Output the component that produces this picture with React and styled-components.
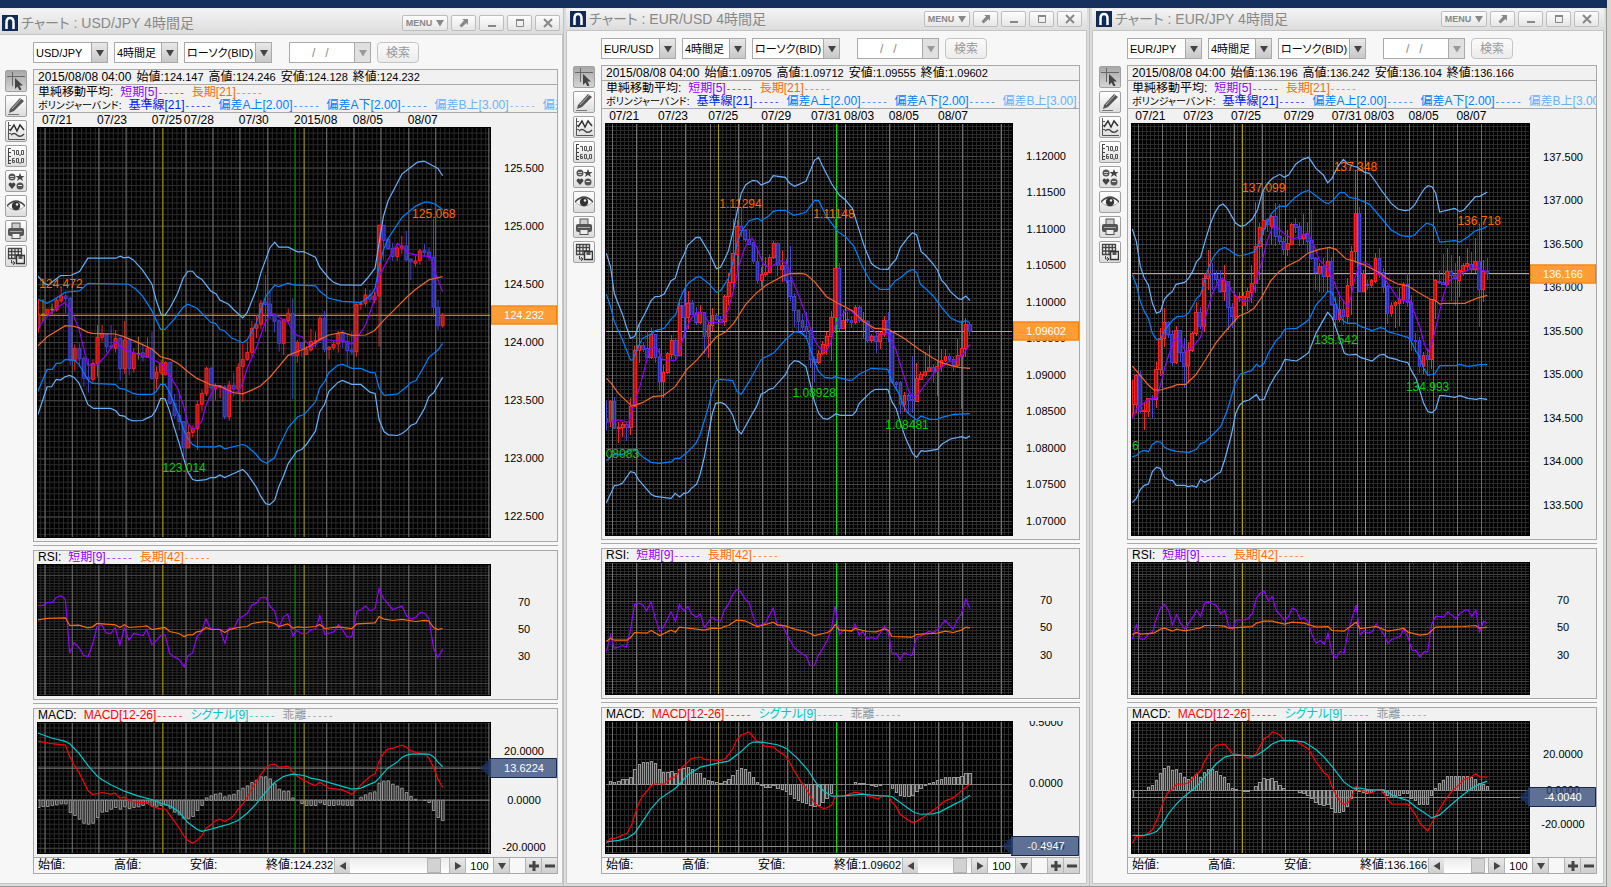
import React, { useState } from 'react';
import styled, { createGlobalStyle } from 'styled-components';

// Chart data. All series of one pane share the units of its box: [x, y, width, height]
// Candles are: colour (r = up, b = down, y = flat), body top, body bottom, wick top, wick bottom
const usdJpy = {
    pair: 'USD/JPY',
    plotHeights: [411, 132, 132],
    prices: ['124.147', '124.246', '124.128', '124.232'],
    dates: [['07/21', 117], ['07/23', 268], ['07/25', 419], ['07/28', 507], ['07/30', 658], ['2015/08', 810], ['08/05', 972], ['08/07', 1123]],
    days: [125, 200, 273, 348, 425, 513, 587, 661, 738, 900, 975, 1049, 1126, 1200, 1346],
    weeks: [449, 838],
    months: [813],
    monthColor: '#009c00',
    first: 107,
    step: 12.494,
    price: {
        box: [103, -398, 1249, 1231],
        major: [-275, 174.2],
        minor: 17.42,
        axis: [['125.500', -275], ['125.000', -101], ['124.500', 72], ['124.000', 246], ['123.500', 420], ['123.000', 594], ['122.500', 766]],
        now: ['124.232', 166],
        marks: [['125.068', 1135, -137, 'high'], ['124.472', 109, 72, 'high'], ['123.014', 448, 624, 'low']],
        lines: [
            ['#0080ff', '105,117 130,130 145,122 168,106 181,97 220,93 243,70 355,73 375,88 393,108 419,152 443,208 455,208 480,178 505,142 518,133 543,145 581,187 594,190 606,208 619,213 640,235 669,248 681,240 706,190 732,110 745,92 757,76 768,80 794,70 808,75 869,78 881,94 906,115 943,124 994,128 1007,118 1025,100 1033,85 1044,20 1056,-30 1069,-64 1107,-127 1145,-161 1169,-173 1181,-173 1200,-166 1219,-150'],
            ['#0080ff', '105,395 131,328 145,328 156,310 168,310 181,298 205,300 218,312 230,335 245,362 256,370 318,373 330,385 345,388 368,400 380,403 419,403 430,395 443,373 455,373 467,395 480,430 493,465 507,510 518,535 531,553 543,560 594,560 606,556 619,566 669,553 681,558 706,583 718,600 735,609 757,592 768,560 781,532 794,502 820,470 838,463 869,425 881,383 894,365 906,338 931,315 945,313 969,325 994,325 1019,337 1033,338 1044,383 1058,406 1094,402 1120,380 1132,367 1145,362 1169,317 1181,292 1206,270 1219,250'],
            ['#66b2ff', '105,48 125,72 135,75 150,62 168,47 197,46 220,35 243,-5 320,-5 332,-11 342,-6 355,-8 368,0 393,30 419,72 432,125 445,165 455,166 470,142 490,100 505,55 518,34 531,34 543,50 556,58 581,93 596,102 606,120 630,133 645,150 669,174 681,158 706,90 720,35 732,0 743,-35 757,-53 768,-38 794,-38 820,-24 836,-25 869,-8 881,22 906,55 920,68 937,75 995,76 1012,55 1033,25 1044,-50 1056,-130 1069,-177 1107,-257 1132,-278 1150,-293 1168,-296 1206,-274 1219,-252'],
            ['#66b2ff', '105,465 131,380 143,380 156,358 168,360 180,350 193,346 205,352 218,368 230,398 243,433 258,445 305,445 320,452 330,466 343,468 355,478 368,482 393,481 406,474 419,468 430,450 443,415 455,416 467,450 480,500 493,545 505,590 518,635 531,658 543,661 568,658 581,652 594,652 606,644 619,652 644,640 669,628 681,640 706,680 718,707 732,730 743,733 757,720 768,680 781,648 794,610 818,573 831,568 844,553 869,513 881,455 894,433 906,394 931,367 943,361 969,373 994,373 1019,396 1033,400 1044,478 1058,515 1070,524 1094,526 1107,520 1120,510 1132,495 1145,490 1169,445 1181,410 1194,398 1219,352'],
            ['#9400ff', '105,203 125,178 140,160 165,138 180,128 193,145 205,172 218,205 243,315 268,315 293,285 318,245 342,268 368,278 393,286 405,290 430,303 450,315 467,345 490,385 507,440 518,490 531,507 543,500 556,485 568,435 581,405 594,382 606,377 631,398 656,395 669,370 681,325 706,265 730,190 745,160 757,163 781,180 794,187 807,215 820,227 832,230 856,262 869,255 881,240 906,240 931,243 943,240 969,253 982,235 1007,195 1031,120 1044,50 1068,0 1095,-50 1107,-38 1132,-18 1156,-13 1185,-10 1194,25 1206,60 1219,95'],
            ['#f06428', '105,258 131,230 181,197 200,198 218,203 243,217 256,220 318,222 342,230 380,247 419,267 443,290 470,298 493,312 518,335 543,355 581,374 606,378 644,398 669,401 694,390 718,377 745,350 768,320 794,286 831,270 856,257 881,238 906,225 943,217 969,226 1007,225 1031,212 1056,182 1081,155 1120,112 1145,88 1181,60 1200,55 1219,50'],
        ],
        candles: 'r164,204,118,218 y163,164,118,183 r148,164,148,168 y148,150,130,163 r121,150,115,155 r108,122,83,130 b108,116,95,160 b115,302,110,315 r265,302,253,332 b265,296,250,320 b295,355,287,380 b352,358,296,398 r310,358,298,368 r232,310,195,350 r220,232,195,245 b222,260,222,277 b258,262,195,268 r235,265,210,278 b235,326,230,362 r240,326,183,342 b240,326,235,345 r280,326,265,338 y280,282,230,298 b278,292,250,305 r265,292,232,290 b265,355,215,358 r337,355,320,388 r310,338,300,345 r307,344,303,346 b307,430,305,435 b430,466,402,475 b466,484,398,510 b484,563,484,590 r517,563,495,565 r505,517,495,532 r433,505,423,570 r400,433,388,455 r325,400,320,408 b325,383,320,420 r377,385,370,420 r377,382,375,415 b380,470,375,478 r375,470,362,482 b375,387,338,410 r322,387,310,400 r298,320,250,425 r277,298,245,302 r205,277,182,290 r193,205,165,235 r130,193,120,208 b128,134,45,215 b132,165,95,177 b165,184,162,217 b182,250,180,275 r178,250,178,285 r160,182,145,188 b160,287,115,417 r247,287,240,308 b247,265,247,292 r268,284,258,284 r244,270,207,275 r242,246,215,262 r175,240,168,242 b175,268,153,277 r262,268,258,298 r253,263,242,270 r220,252,213,278 b220,244,210,264 b244,272,222,318 b270,276,215,285 r133,275,130,290 r131,134,122,150 r105,130,85,140 b106,118,90,128 r108,120,95,130 r-104,108,-104,260 b-104,-58,-104,0 b-62,-34,-62,-30 b-35,-10,-52,3 r-36,-10,-42,3 r-42,-35,-72,-18 b-42,0,-87,5 b-2,5,-5,60 r3,10,-12,20 r-27,2,-33,15 b-28,-22,-47,-12 b-24,-8,-38,3 b-8,142,-123,172 b142,197,120,210 r165,197,160,203',
    },
    rsi: {
        box: [103, 72, 1249, 395],
        major: [187, 81],
        minor: 8.1,
        axis: [['70', 187], ['50', 268], ['30', 348]],
        lines: [
            ['#9400ff', '105,197 119,196 131,187 145,187 156,172 169,167 181,177 193,338 205,308 218,322 231,345 243,350 256,312 268,260 281,254 293,278 306,280 318,263 331,315 343,263 356,300 369,280 395,286 405,268 419,313 430,303 443,286 455,283 468,340 480,350 493,357 508,380 518,347 531,338 543,290 555,275 568,237 581,266 606,267 620,310 631,263 645,264 656,238 681,220 694,195 706,190 718,173 732,172 745,200 757,213 768,263 781,230 793,222 807,288 818,271 831,280 845,280 856,270 870,265 881,226 895,283 920,275 932,253 945,272 956,290 969,290 983,213 995,208 1007,198 1019,212 1033,205 1044,145 1056,175 1068,190 1081,208 1107,198 1120,228 1132,236 1145,232 1157,217 1169,219 1181,235 1194,325 1206,352 1219,327'],
            ['#ff6a00', '105,239 131,235 181,233 193,256 218,255 243,263 256,260 268,250 318,254 331,262 343,254 356,262 393,259 405,257 419,268 455,262 468,274 493,280 508,289 518,284 531,284 543,275 556,272 568,262 581,268 606,268 620,277 631,269 656,262 681,259 694,250 732,244 757,250 768,259 793,251 807,264 820,260 838,262 869,259 881,253 895,265 932,260 969,265 983,251 1033,248 1044,229 1056,236 1081,241 1107,238 1145,244 1169,241 1181,243 1194,262 1206,268 1219,265'],
        ],
    },
    macd: {
        box: [103, 547, 1249, 395],
        major: [637, 144],
        minor: 14.4,
        axis: [['20.0000', 635], ['0.0000', 779], ['-20.0000', 920]],
        cursor: ['13.6224', 685],
        zero: 781,
        bars: [803, 800, 800, 797, 795, 792, 792, 818, 827, 838, 850, 853, 850, 833, 817, 815, 808, 803, 808, 801, 806, 803, 801, 797, 790, 799, 799, 797, 795, 805, 817, 825, 835, 836, 830, 812, 797, 774, 768, 763, 760, 771, 766, 763, 752, 745, 738, 728, 721, 711, 711, 717, 732, 748, 754, 754, 774, 781, 791, 797, 797, 797, 789, 794, 797, 797, 795, 796, 797, 797, 781, 772, 765, 759, 756, 730, 724, 723, 733, 739, 745, 758, 770, 778, 781, 782, 788, 812, 833, 842],
        lines: [
            ['#ff0000', '105,604 143,612 181,616 193,650 205,675 218,697 243,752 256,764 281,758 306,763 318,760 331,775 343,772 356,782 380,788 405,788 419,800 430,803 443,807 457,808 468,825 493,862 507,888 518,902 531,910 543,902 556,888 568,865 581,855 594,843 606,838 620,845 644,828 656,808 669,793 681,772 706,725 718,705 732,685 745,675 757,673 768,683 793,679 807,697 820,710 838,722 856,732 869,737 881,727 906,745 943,750 969,763 982,750 994,735 1019,710 1033,703 1044,665 1056,642 1068,628 1081,626 1107,616 1120,623 1132,633 1145,638 1157,641 1170,642 1181,655 1194,683 1206,718 1219,743'],
            ['#00c8c8', '105,580 143,595 181,605 193,612 218,640 243,677 268,708 281,719 306,735 343,754 380,768 419,779 443,790 468,798 493,815 518,848 543,868 556,874 581,868 606,860 631,853 656,842 681,820 706,792 732,757 757,727 781,710 806,703 838,707 856,715 881,720 919,732 969,748 994,745 1019,733 1033,727 1044,715 1068,685 1094,667 1107,653 1120,646 1132,643 1181,643 1194,651 1206,667 1219,681'],
        ],
    },
};

const eurUsd = {
    pair: 'EUR/USD',
    plotHeights: [413, 133, 133],
    prices: ['1.09705', '1.09712', '1.09555', '1.09602'],
    dates: [['07/21', 143], ['07/23', 285], ['07/25', 431], ['07/29', 585], ['07/31', 730], ['08/03', 826], ['08/05', 956], ['08/07', 1099]],
    days: [152, 222, 294, 364, 437, 518, 590, 662, 733, 887, 959, 1030, 1101, 1171, 1284],
    weeks: [460, 829],
    months: [805],
    monthColor: '#00dc00',
    first: 135,
    step: 11.876,
    price: {
        box: [131, -411, 1186, 1239],
        major: [-312, 109.6],
        minor: 10.96,
        axis: [['1.12000', -313], ['1.11500', -204], ['1.11000', -94], ['1.10500', 14], ['1.10000', 125], ['1.09500', 235], ['1.09000', 344], ['1.08500', 452], ['1.08000', 563], ['1.07500', 671], ['1.07000', 782]],
        now: ['1.09602', 214],
        marks: [['1.11294', 463, -169, 'high'], ['1.11148', 736, -138, 'high'], ['08083', 133, 581, 'low'], ['1.08928', 676, 399, 'low'], ['1.08481', 946, 494, 'low']],
        lines: [
            ['#0080ff', '135,103 147,140 158,185 182,240 205,300 212,300 225,265 240,235 265,222 277,212 303,205 325,175 337,163 348,120 360,90 375,68 395,53 407,50 432,70 455,97 467,92 490,55 502,10 515,-50 527,-85 550,-118 575,-125 585,-118 608,-133 620,-146 633,-149 655,-149 680,-134 715,-143 727,-160 740,-179 752,-178 775,-130 808,-85 830,-70 855,-40 875,10 890,40 905,68 930,88 955,88 975,62 990,53 1012,34 1025,28 1037,38 1048,73 1060,83 1085,108 1110,143 1135,173 1158,185 1168,187 1180,182 1192,188'],
            ['#0080ff', '135,602 158,582 182,583 205,570 217,568 240,590 265,607 290,610 325,605 335,595 348,595 372,575 395,550 407,525 432,440 445,385 455,362 467,358 502,362 515,395 527,403 550,365 585,298 620,280 655,240 682,215 700,218 715,230 727,265 740,305 752,335 770,352 790,355 800,350 840,361 850,360 870,343 905,325 953,328 965,365 985,400 1000,440 1012,460 1037,480 1050,468 1075,478 1097,478 1110,472 1145,463 1192,461'],
            ['#66b2ff', '135,-20 147,20 158,100 170,133 182,163 193,200 205,235 217,230 229,195 245,165 265,122 277,110 290,109 303,102 323,62 335,55 348,10 360,-15 372,-45 395,-67 407,-68 432,-25 455,26 467,22 480,-5 490,-28 502,-80 515,-145 527,-200 540,-226 560,-239 573,-237 585,-225 608,-235 620,-253 655,-248 668,-230 682,-221 715,-236 740,-299 752,-308 762,-285 790,-228 812,-195 830,-180 850,-155 862,-115 885,-40 905,10 917,20 930,27 953,28 965,12 977,-2 990,-38 1012,-68 1025,-82 1037,-75 1050,-25 1062,-15 1085,12 1097,30 1110,62 1120,72 1135,95 1158,116 1168,118 1180,108 1192,122'],
            ['#66b2ff', '135,728 158,677 170,675 182,669 205,635 217,638 229,660 265,703 277,709 323,715 335,700 348,711 360,700 372,698 382,685 397,673 407,645 420,590 432,520 443,460 453,430 467,427 480,433 490,445 502,465 515,508 527,522 560,460 573,437 585,402 597,397 608,388 620,385 655,345 668,315 682,302 695,305 715,320 727,370 740,425 752,460 765,475 778,478 790,470 802,461 815,466 850,466 860,455 870,430 905,395 917,388 953,388 965,425 977,445 990,490 1005,535 1025,580 1037,592 1050,572 1062,574 1097,568 1110,553 1135,537 1168,530 1180,535 1192,527'],
            ['#9400ff', '135,487 170,480 200,487 210,450 235,370 260,270 268,262 282,265 298,298 335,302 345,285 360,225 380,178 395,158 405,157 420,163 432,187 470,188 490,148 505,90 520,20 535,-30 548,-60 560,-65 575,-30 590,10 608,25 625,12 645,3 660,12 675,60 690,95 715,165 740,240 755,265 772,275 785,255 800,195 820,165 835,150 845,150 860,165 875,175 900,200 920,220 955,222 975,265 1005,365 1015,395 1025,412 1037,408 1050,390 1085,343 1105,325 1130,305 1150,302 1170,285 1192,253'],
            ['#f06428', '135,355 147,367 170,400 205,435 217,436 240,428 270,410 300,407 335,380 370,327 400,298 432,258 455,230 480,217 505,190 540,133 570,100 600,75 645,50 668,41 700,40 715,43 740,65 775,110 800,125 850,152 885,187 915,205 955,208 1000,235 1050,272 1085,295 1110,308 1135,316 1160,322 1192,325'],
        ],
        candles: 'b475,485,424,510 r424,485,420,500 b425,505,412,507 r502,506,487,548 r492,503,487,530 b492,502,490,543 r438,502,415,525 r270,438,258,440 r256,270,195,310 b256,268,245,275 b266,292,212,295 r223,292,203,297 b223,292,222,310 b292,364,265,392 r338,365,315,413 r280,338,275,342 r240,282,225,298 b240,285,235,300 r136,285,118,288 b136,172,87,235 r130,172,92,208 b130,162,120,165 b163,188,142,195 r157,188,135,192 b157,230,155,282 r195,230,190,293 r165,196,145,212 b165,178,160,182 b178,186,167,190 r108,184,105,198 r67,108,40,135 r-20,67,-123,97 r-102,-18,-120,40 b-102,-88,-156,-70 b-88,-62,-88,-55 b-63,-48,-90,-45 b-52,5,-52,12 b5,62,-35,72 r42,62,20,80 r38,43,-10,50 r-8,38,-15,40 r-50,-7,-57,-3 b-50,15,-54,48 r15,27,-28,65 b15,60,-2,68 b60,108,-42,123 b108,150,100,200 b150,183,150,215 b180,202,162,225 b200,215,155,235 b210,298,208,325 b298,308,290,365 r280,308,270,312 r252,280,242,285 r228,255,215,285 r172,228,153,302 r25,172,-123,220 b25,205,10,212 r180,205,150,207 b178,182,157,190 b180,188,167,205 r142,188,135,193 b142,182,135,190 r180,184,155,235 b184,240,180,248 r228,242,222,250 b228,243,218,280 r222,245,215,267 r182,222,168,232 b182,218,157,245 b218,368,215,373 b368,372,362,392 b368,433,362,462 r405,433,397,457 b405,420,400,463 b418,422,287,460 r354,423,310,427 r342,357,335,357 r333,346,275,350 r322,334,255,337 b322,334,312,370 r318,334,302,407 r300,320,268,335 r288,302,268,307 b289,298,280,305 b297,316,290,333 r286,316,237,320 r265,288,183,447 r192,265,175,292 b192,215,187,228',
    },
    rsi: {
        box: [131, 67, 1186, 398],
        major: [184, 80.5],
        minor: 8.05,
        axis: [['70', 182], ['50', 263], ['30', 344]],
        lines: [
            ['#9400ff', '135,335 147,286 158,325 170,322 182,317 193,322 205,270 217,194 229,190 240,195 252,213 265,186 277,235 290,275 302,260 323,216 336,245 347,194 360,213 372,200 383,222 397,232 408,222 420,262 442,232 455,242 467,244 478,210 490,193 502,165 513,149 525,155 538,178 550,188 562,232 573,260 597,250 608,228 620,205 632,258 645,255 668,300 682,325 705,343 715,347 727,377 740,376 752,345 763,328 778,300 790,262 800,198 812,285 825,270 848,275 858,253 870,286 880,275 892,297 905,293 920,297 943,260 955,280 965,340 977,340 989,360 1000,340 1023,347 1036,295 1048,288 1073,275 1085,278 1097,270 1120,241 1143,268 1155,240 1167,222 1180,178 1192,207'],
            ['#ff6a00', '135,304 147,296 158,301 195,301 205,294 217,278 252,280 265,272 290,287 323,271 336,277 347,262 420,271 442,265 467,266 478,260 490,257 513,241 538,243 573,260 608,251 620,247 632,255 655,258 682,268 715,275 740,287 778,278 790,270 800,254 812,270 848,273 858,266 892,275 920,276 943,267 955,271 965,290 1023,292 1036,284 1097,280 1120,274 1143,278 1167,271 1180,262 1192,265'],
        ],
    },
    macd: {
        box: [131, 544, 1186, 398],
        major: [546, 187],
        minor: 18.7,
        axis: [['0.5000', 546], ['0.0000', 731], ['-0.5000', 919]],
        cursor: ['-0.4947', 919],
        zero: 733,
        bars: [733, 724, 727, 724, 720, 720, 712, 688, 673, 667, 667, 664, 671, 688, 697, 697, 694, 701, 688, 687, 684, 690, 700, 702, 715, 721, 724, 727, 730, 724, 718, 706, 691, 687, 690, 697, 712, 727, 738, 743, 743, 737, 745, 748, 754, 763, 775, 781, 787, 790, 796, 799, 796, 787, 775, 760, 733, 733, 733, 733, 733, 727, 730, 730, 735, 737, 740, 737, 733, 735, 746, 757, 768, 769, 769, 766, 754, 745, 738, 730, 727, 721, 718, 712, 712, 712, 712, 709, 700, 700],
        lines: [
            ['#ff0000', '135,910 147,895 160,895 195,880 208,855 227,795 240,768 252,755 265,738 278,731 303,733 323,715 337,710 348,690 383,656 408,652 420,659 467,662 480,657 490,645 502,628 513,602 527,586 550,577 573,605 585,610 597,620 620,621 632,632 655,648 668,668 682,695 700,725 715,745 740,790 752,800 768,806 778,803 790,795 800,770 825,768 858,757 880,762 905,771 923,777 943,767 955,768 965,787 977,800 989,823 1012,840 1025,848 1036,845 1062,828 1073,820 1097,802 1120,783 1143,774 1167,753 1192,733'],
            ['#00c8c8', '135,906 170,901 195,895 217,880 240,845 265,806 290,777 336,745 372,705 408,682 455,671 490,664 525,637 550,613 562,607 585,607 632,615 658,626 690,655 720,690 745,730 765,752 790,769 825,768 880,763 905,766 965,770 989,788 1012,805 1030,818 1048,823 1085,822 1105,816 1143,795 1170,781 1192,766'],
        ],
    },
};

const eurJpy = {
    pair: 'EUR/JPY',
    plotHeights: [413, 133, 133],
    prices: ['136.196', '136.242', '136.104', '136.166'],
    dates: [['07/21', 150], ['07/23', 293], ['07/25', 436], ['07/29', 594], ['07/31', 737], ['08/03', 834], ['08/05', 967], ['08/07', 1110]],
    days: [159, 231, 303, 374, 446, 529, 600, 672, 743, 898, 970, 1041, 1113, 1184],
    weeks: [470, 839],
    months: [815],
    monthColor: '#00c800',
    first: 141,
    step: 11.92,
    price: {
        box: [137, -411, 1193, 1239],
        major: [-308, 130.5],
        minor: 13.05,
        axis: [['137.500', -310], ['137.000', -180], ['136.500', -49], ['136.000', 81], ['135.500', 212], ['135.000', 342], ['134.500', 473], ['134.000', 602], ['133.500', 734]],
        now: ['136.166', 41],
        marks: [['137.099', 469, -217, 'high'], ['137.348', 743, -280, 'high'], ['136.718', 1113, -118, 'high'], ['135.542', 685, 240, 'low'], ['134.993', 959, 380, 'low'], ['6', 140, 557, 'low']],
        lines: [
            ['#0080ff', '141,45 153,75 165,125 177,155 189,175 201,220 213,238 225,238 237,212 262,180 275,170 297,168 310,158 333,115 345,105 360,50 372,15 385,-12 400,-30 417,-38 435,-27 450,-16 462,-12 487,-18 505,-25 520,-50 532,-85 557,-140 580,-162 600,-160 625,-185 650,-203 668,-209 690,-193 715,-173 727,-169 740,-178 762,-203 775,-202 790,-188 815,-183 850,-167 880,-132 915,-90 945,-73 970,-70 985,-75 1000,-92 1020,-110 1035,-107 1045,-98 1060,-54 1105,-58 1120,-54 1145,-70 1167,-88 1190,-95 1202,-101'],
            ['#0080ff', '141,590 153,587 165,575 177,571 189,575 201,553 213,545 225,546 237,562 250,568 272,574 310,577 333,568 345,550 357,547 380,525 405,500 425,450 437,410 450,365 465,342 497,332 512,313 522,320 535,310 550,275 572,240 582,232 597,207 632,205 655,190 670,178 690,135 715,108 725,93 738,98 750,130 762,165 772,183 785,190 808,190 825,200 858,212 882,203 892,205 905,215 930,222 965,232 975,245 987,270 1000,290 1012,325 1025,345 1045,342 1060,317 1110,316 1120,313 1145,319 1180,314 1202,314'],
            ['#66b2ff', '141,-93 153,-55 165,20 177,55 189,75 201,130 213,160 225,155 237,117 248,105 260,95 272,73 297,67 309,55 321,35 333,5 345,-8 360,-62 375,-110 387,-140 400,-162 412,-168 425,-155 450,-110 465,-101 480,-105 500,-123 515,-150 530,-205 545,-230 560,-245 582,-257 595,-248 608,-255 630,-288 650,-302 668,-308 690,-275 712,-255 725,-232 738,-245 755,-280 772,-302 785,-288 800,-282 815,-278 835,-263 850,-260 865,-240 885,-210 915,-170 935,-153 955,-148 970,-150 985,-165 1000,-192 1015,-215 1025,-223 1037,-220 1048,-200 1060,-144 1105,-155 1120,-145 1132,-150 1167,-190 1180,-191 1202,-204'],
            ['#66b2ff', '141,728 153,715 165,688 177,676 189,672 201,635 213,622 225,625 237,652 250,660 262,662 272,676 297,676 309,680 321,677 333,682 345,658 357,667 380,655 393,643 405,636 417,600 437,525 450,460 462,435 475,424 490,420 512,404 522,420 535,418 550,380 570,345 582,330 597,298 632,303 645,295 668,278 690,220 725,157 738,172 750,205 762,240 775,280 787,285 810,283 825,293 858,303 880,285 893,283 905,292 930,298 943,303 965,308 977,335 990,357 1012,430 1025,455 1037,458 1048,448 1060,407 1072,407 1105,412 1120,407 1145,415 1170,418 1180,415 1202,418'],
            ['#9400ff', '141,475 155,445 180,425 200,415 213,415 225,375 240,315 262,250 272,233 283,240 300,275 320,262 345,232 360,170 380,100 400,62 410,55 425,70 435,88 460,118 485,125 500,110 515,50 530,0 545,-60 560,-98 570,-100 600,-75 620,-63 640,-70 665,-82 680,-55 700,0 725,25 740,55 760,105 785,142 795,110 805,60 820,15 835,8 850,15 862,30 880,45 895,55 915,85 935,115 950,122 970,120 985,160 1000,200 1015,255 1025,275 1037,250 1055,175 1070,110 1085,65 1105,52 1120,42 1145,30 1167,20 1185,30 1202,35'],
            ['#f06428', '141,318 165,347 189,375 205,390 225,390 260,380 275,374 300,373 330,345 350,315 390,250 410,225 440,190 460,168 487,157 505,145 530,108 555,62 580,35 600,20 640,0 665,-20 700,-32 730,-38 750,-32 780,-3 800,2 835,15 875,35 910,60 935,72 965,78 1000,100 1030,117 1045,120 1060,132 1072,130 1135,130 1170,115 1202,106'],
        ],
        candles: 'r432,460,360,475 r347,432,342,460 b347,455,332,458 r450,455,427,510 r415,453,415,470 b415,419,405,473 r328,418,305,445 r235,328,205,347 r186,235,145,262 b187,224,183,235 b224,308,210,318 r210,308,197,312 b210,276,210,305 b276,318,235,385 r270,315,247,370 r220,272,215,275 r157,220,125,228 b157,198,142,208 r55,200,40,217 r40,56,-30,90 b40,44,8,90 b43,58,32,70 b58,95,30,98 r62,95,15,122 b65,142,62,210 b142,168,130,205 r110,168,103,185 r108,112,95,125 r110,135,95,138 r95,112,83,152 r70,97,15,130 r-40,70,-173,100 r-97,-40,-110,60 r-120,-94,-207,-75 b-122,-108,-127,-85 r-130,-102,-135,-45 b-130,-72,-172,-42 b-72,-56,-168,-47 b-55,-33,-68,-15 r-50,-33,-90,-12 r-107,-47,-112,-45 b-108,-98,-127,-80 b-100,-65,-113,-42 r-78,-65,-138,-45 b-80,-55,-115,-25 b-58,-5,-152,0 b-5,38,-10,90 r20,40,10,97 b20,48,-5,95 r5,50,-40,93 b5,133,-10,137 b133,178,110,205 r148,178,110,185 b148,168,120,195 r75,170,55,188 r-27,75,-43,165 r-140,-27,-270,10 b-140,95,-160,97 r40,95,30,97 b73,77,60,90 r62,77,57,85 r-5,65,-20,70 b-5,38,-35,55 b36,80,25,100 b78,160,75,192 r135,160,125,172 r127,135,122,203 r118,130,85,198 r72,120,65,132 b72,128,40,140 b127,242,105,272 b240,244,220,277 b240,318,230,338 r286,318,275,342 b286,298,267,347 r118,298,118,328 r62,120,57,178 b64,68,32,72 b66,73,-18,75 r33,73,-37,75 b33,47,-15,122 b45,55,10,137 r32,60,-12,112 r15,35,10,47 r10,18,-35,30 b12,28,-25,40 r3,28,-65,40 b3,88,-105,200 r35,88,0,125 b35,40,-5,60',
    },
    rsi: {
        box: [137, 67, 1193, 398],
        major: [184, 80.5],
        minor: 8.05,
        axis: [['70', 182], ['50', 263], ['30', 344]],
        lines: [
            ['#9400ff', '141,298 153,256 165,298 177,298 189,282 201,278 213,235 225,205 237,194 250,215 261,255 273,224 285,250 297,268 320,235 333,212 345,230 357,190 370,187 392,197 405,222 417,212 429,258 440,268 452,240 475,240 487,236 500,220 512,175 524,160 535,155 548,183 559,170 571,212 596,241 607,232 619,205 631,211 643,238 655,233 667,246 679,288 691,310 703,302 715,313 726,280 738,340 750,355 762,335 774,340 787,270 810,196 822,285 834,273 846,280 858,276 870,252 893,283 905,310 917,298 941,290 953,268 965,292 977,331 989,332 1001,351 1013,335 1024,336 1036,253 1048,229 1072,232 1084,217 1108,236 1120,222 1132,213 1144,209 1156,230 1168,211 1179,278 1191,244 1202,250'],
            ['#ff6a00', '141,284 153,278 165,283 205,280 225,268 237,265 261,274 273,268 297,273 320,269 345,264 357,257 392,257 417,259 429,265 475,262 500,260 512,250 535,244 559,244 596,253 619,247 655,250 691,262 726,260 738,272 774,274 810,247 822,266 870,260 905,274 953,266 965,277 1001,286 1024,283 1048,262 1132,260 1168,257 1179,265 1202,262'],
        ],
    },
    macd: {
        box: [137, 544, 1193, 398],
        major: [646, 105],
        minor: 10.5,
        axis: [['20.0000', 644], ['0.0000', 749], ['-20.0000', 851]],
        cursor: ['-4.0040', 772],
        zero: 751,
        bars: [772, 752, 752, 752, 742, 736, 721, 700, 685, 679, 691, 688, 700, 712, 718, 712, 703, 712, 697, 688, 688, 694, 706, 712, 730, 745, 748, 751, 755, 755, 751, 739, 727, 715, 718, 715, 724, 736, 745, 752, 752, 752, 758, 762, 768, 777, 787, 793, 796, 794, 806, 818, 818, 815, 800, 775, 745, 754, 757, 760, 757, 751, 751, 757, 768, 772, 768, 766, 762, 761, 775, 782, 794, 794, 794, 766, 745, 730, 721, 709, 709, 709, 709, 709, 709, 712, 718, 730, 733, 739],
        lines: [
            ['#ff0000', '141,910 153,889 177,887 200,870 213,845 237,775 250,755 261,750 273,733 297,732 310,729 333,702 345,693 357,665 380,628 392,617 417,613 440,641 475,648 487,655 500,652 512,640 535,597 548,590 559,577 571,580 583,587 596,602 631,604 655,620 667,627 691,667 715,700 726,707 738,740 750,765 762,785 774,794 787,787 800,765 810,740 822,750 846,760 858,759 870,751 885,750 905,780 917,792 965,793 977,810 989,827 1001,850 1024,873 1036,850 1048,828 1072,787 1096,755 1120,733 1132,720 1156,710 1168,702 1179,711 1202,712'],
            ['#00c8c8', '141,886 177,886 201,880 213,875 225,862 250,820 273,792 297,769 333,740 357,712 392,672 417,652 440,646 475,647 500,649 512,647 535,632 559,613 583,603 620,602 655,607 691,630 715,653 738,680 774,727 800,745 822,745 850,750 893,750 917,765 941,775 965,782 989,802 1013,818 1036,834 1060,825 1096,793 1120,772 1156,745 1179,733 1202,724'],
        ],
    },
};

const candleColors = {
    r: ['#ff2020', '#b41414'],
    b: ['#4040dc', '#2c2c96'],
    y: ['#b08c00', '#b08c00'],
};

// Every line through `start` at the given spacing that fits between min and max
const gridValues = (start, spacing, min, max) => {
    const values = [];
    for (let v = start - Math.floor((start - min) / spacing) * spacing; v < max; v += spacing) values.push(v);
    return values;
};

const percent = (value, start, size) => `${((value - start) / size) * 100}%`;

const Plot = ({ chart, pane, height }) => {
    const [x, y, w, h] = pane.box;
    const across = (values) => values.map(v => `M${x} ${v}H${x + w}`).join('');
    const down = (values) => values.map(v => `M${v} ${y}V${y + h}`).join('');

    return (
        <PlotSvg $height={height} viewBox={pane.box.join(' ')} preserveAspectRatio="none" shapeRendering="crispEdges" aria-hidden="true">
            <path stroke="#2b2b2b" d={across(gridValues(pane.major[0], pane.minor, y, y + h)) + down(gridValues(chart.first + chart.step / 2, chart.step, x, x + w))} />
            <path stroke="#444" d={across(gridValues(pane.major[0], pane.major[1], y, y + h))} />
            <path stroke="#707070" d={down(chart.days)} />
            <path stroke="#aaa000" d={down(chart.weeks)} />
            <path stroke={chart.monthColor} d={down(chart.months)} />
            {pane.now && <path stroke="#ff9c00" d={across([pane.now[1]])} />}
            {pane.bars && <path stroke="#777" d={across([pane.zero])} />}
            {pane.bars && pane.bars.map((end, i) => (
                <rect key={i} x={chart.first + i * chart.step - 3} y={Math.min(end, pane.zero)} width="7" height={Math.abs(end - pane.zero)} fill="#303030" stroke="#969696" />
            ))}
            {pane.cursor && <path stroke="#8c8c8c" d={across([pane.cursor[1]])} />}
            {pane.candles && pane.candles.split(' ').map((candle, i) => {
                const [stroke, fill] = candleColors[candle[0]];
                const [top, bottom, high, low] = candle.slice(1).split(',').map(Number);
                const cx = chart.first + i * chart.step;
                return (
                    <g key={i} stroke={stroke} fill={fill}>
                        <path d={`M${cx} ${high}V${low}`} />
                        <rect x={cx - 4} y={top} width="8" height={Math.max(bottom - top, 1)} />
                    </g>
                );
            })}
            {pane.lines.map(([color, points]) => <polyline key={points} fill="none" stroke={color} strokeWidth="1.2" shapeRendering="auto" points={points} />)}
            <rect x={x} y={y} width={w} height={h} fill="none" stroke="#000" strokeWidth="2" />
        </PlotSvg>
    );
};

const Pane = ({ chart, pane, height }) => {
    const [x, y, w, h] = pane.box;
    return (
        <PaneRow>
            <PlotArea>
                <Plot chart={chart} pane={pane} height={height} />
                {pane.marks && pane.marks.map(([text, left, top, kind]) => (
                    <Mark key={text} $kind={kind} style={{ left: percent(left, x, w), top: percent(top, y, h) }}>{text}</Mark>
                ))}
            </PlotArea>
            <Axis>
                <AxisLabels>
                    {pane.axis.map(([text, top]) => <AxisLabel key={text} style={{ top: percent(top, y, h) }}>{text}</AxisLabel>)}
                </AxisLabels>
                {pane.now && <PriceTag style={{ top: percent(pane.now[1], y, h) }}>{pane.now[0]}</PriceTag>}
                {pane.cursor && (
                    <CursorTag style={{ top: percent(pane.cursor[1], y, h) }}>
                        <CursorShape viewBox="0 0 77 20" preserveAspectRatio="none" aria-hidden="true">
                            <path d="M11 0L0 10L11 20Z" fill="#1b3160" fillOpacity=".85" />
                            <path d="M9 .5H76.500V19.500H9" fill="#2c4474" fillOpacity=".75" stroke="#14294f" />
                        </CursorShape>
                        <CursorText>{pane.cursor[0]}</CursorText>
                    </CursorTag>
                )}
            </Axis>
        </PaneRow>
    );
};

// Indicator name followed by its coloured series
const Legend = ({ name, items, small }) => (
    <LegendRow>
        <LegendName $small={small}>{name}</LegendName>
        {items.map(([text, color]) => <LegendItem key={text} $color={color}>{text}<Dashes>-----</Dashes></LegendItem>)}
    </LegendRow>
);

const averages = [['短期[5]', '#9400ff'], ['長期[21]', '#ff6a00']];
const bands = [['基準線[21]', '#0020ff'], ['偏差A上[2.00]', '#0080ff'], ['偏差A下[2.00]', '#0080ff'], ['偏差B上[3.00]', '#66b2ff']];
const lastBand = ['偏差B下[3.00]', '#66b2ff'];
const rsiSeries = [['短期[9]', '#9400ff'], ['長期[42]', '#ff6a00']];
const macdSeries = [['MACD[12-26]', '#ff0000'], ['シグナル[9]', '#00c8c8'], ['乖離', '#969696']];

const Select = ({ label, value, width }) => (
    <SelectBox $width={width}>
        <NativeSelect aria-label={label} defaultValue={value}>
            <option>{value}</option>
        </NativeSelect>
        <SelectArrow><Triangle /></SelectArrow>
    </SelectBox>
);

const Triangle = ({ color = '#444', turn = 0, size = 8 }) => (
    <svg width={size} height={size} viewBox="0 0 8 8" aria-hidden="true">
        <path d="M0 1H8L4 7.500Z" fill={color} transform={`rotate(${turn} 4 4)`} />
    </svg>
);

const toolIcons = {
    'カーソル': <><path d="M0 4.500H18M5.500 0V14" stroke="#666" fill="none" /><path d="M8 6V17L10.500 14.500L12.500 18.500L14.500 17.500L12.500 13.500L16 13.500Z" fill="#444" /></>,
    '描画': <><path d="M3 12L13 1L17 4L7 14L2 16Z" fill="#555" /><path d="M14 2L5 12" stroke="#bbb" /><path d="M1 17.500H12" stroke="#777" /></>,
    'テクニカル': <><path d="M1.500 0V17.500H18M1 3.500H4M1 7.500H4M1 11.500H4" stroke="#555" fill="none" /><path d="M3 9L7 3L10 9L13 3L17 8" stroke="#333" strokeWidth="1.500" fill="none" /><path d="M4 13Q7 10 10 13T17 12" stroke="#444" strokeWidth="1.500" fill="none" /></>,
    '価格表示': <><path d="M1.500 1V17M1 1.500H4M1 5.500H4M1 9.500H4M1 13.500H4M1 16.500H4" stroke="#444" fill="none" /><path d="M5 3.500H7.500V8M9.500 3.500H11.500V7.500H9.500ZM14.500 3.500H16.500V7.500H14.500ZM13 7V9M7.500 11.500H5.500V15.500H7.500V13.500H5.500M9.500 11.500H11.500V15.500H9.500ZM14.500 11.500H16.500V15.500H14.500ZM13 15V17" stroke="#555" fill="none" /></>,
    'マーク': <><circle cx="5" cy="5" r="3.500" fill="#555" /><path d="M3 4.500H7M3.500 6.500H6.500" stroke="#ccc" /><path d="M13 1L14.200 4H17.500L15 6L16 9L13 7L10 9L11 6L8.500 4H11.800Z" fill="#444" /><path d="M5 17L1.500 13Q1.500 10.500 3.500 10.500Q5 10.500 5 12Q5 10.500 6.800 10.500Q8.500 11 8.500 13Z" fill="#444" /><circle cx="13" cy="14" r="3.500" fill="#555" /><path d="M11 13.500H15" stroke="#ddd" /></>,
    '表示': <><path d="M0 9Q9 -1 18 9Q9 18 0 9Z" fill="#999" /><path d="M0 9Q9 -1 18 9" fill="none" stroke="#444" strokeWidth="1.500" /><path d="M1 9Q4 6 6 6V12Q3 12 1 9ZM17 9Q14 6 12 6V12Q15 12 17 9Z" fill="#f8f8f8" /><circle cx="9" cy="9" r="4.200" fill="#333" /><circle cx="10" cy="7.500" r="1.200" fill="#eee" /></>,
    '印刷': <><rect x="5" y="1" width="8" height="7" fill="#ccc" stroke="#555" /><rect x="1" y="6" width="16" height="8" rx="2" fill="#555" /><path d="M3 9.500H15" stroke="#aaa" /><rect x="5" y="11.500" width="8" height="5" fill="#eee" stroke="#555" /></>,
    '保存': <><path d="M1.500 1.500H14.500V11.500H1.500ZM1.500 4.500H14.500M1.500 8H14.500M4.700 1.500V11.500M8 1.500V11.500M11.300 1.500V11.500" fill="none" stroke="#444" strokeWidth="1.300" /><rect x="9.500" y="8.500" width="8" height="8" fill="#eee" stroke="#333" strokeWidth="1.500" /><path d="M11.500 9V12H15.500V9" fill="#555" /><path d="M4.500 13V16H7M6 14L8 16L6 18" fill="none" stroke="#444" /></>,
};

const ChartWindow = ({ chart, edge }) => {
    const [date, setDate] = useState('      /   /');
    const [plotPrice, plotRsi, plotMacd] = chart.plotHeights;
    const [open, high, low, close] = chart.prices;

    return (
        <Frame $edge={edge}>
            <TitleBar $edge={edge}>
                <Logo viewBox="0 0 16 16" aria-hidden="true">
                    <rect width="16" height="16" fill="#102a58" />
                    <path d="M4.500 14V7.500Q4.500 3 8 3T11.500 7.500V14" fill="none" stroke="#fff" strokeWidth="2.500" />
                </Logo>
                <Title>チャート : {chart.pair} 4時間足</Title>
                <MenuButton>MENU <Triangle color="#888" /></MenuButton>
                <TitleButton aria-label="切り離し"><svg width="10" height="10" viewBox="0 0 10 10"><path d="M3 1H9V7L7.500 5L2.500 9.500L.5 7.500L5 2.500Z" fill="#888" /></svg></TitleButton>
                <TitleButton aria-label="最小化"><svg width="10" height="10" viewBox="0 0 10 10"><path d="M1 8H9" stroke="#888" strokeWidth="2" /></svg></TitleButton>
                <TitleButton aria-label="最大化"><svg width="10" height="10" viewBox="0 0 10 10"><path d="M1.500 2V8.500H8.500V2" fill="none" stroke="#888" /><path d="M1 2H9" stroke="#888" strokeWidth="2" /></svg></TitleButton>
                <TitleButton aria-label="閉じる"><svg width="10" height="10" viewBox="0 0 10 10"><path d="M1 1L9 9M9 1L1 9" stroke="#888" strokeWidth="2" /></svg></TitleButton>
            </TitleBar>
            <Body $edge={edge}>
                <Tools>
                    {Object.entries(toolIcons).map(([name, icon], i) => (
                        <ToolButton key={name} aria-label={name} $pressed={i === 0}>
                            <svg width="18" height="18" viewBox="0 0 18 18">{icon}</svg>
                        </ToolButton>
                    ))}
                </Tools>
                <Main>
                    <Toolbar>
                        <Select label="通貨ペア" value={chart.pair} width={75} />
                        <Select label="足種" value="4時間足" width={64} />
                        <Select label="チャート種類" value="ローソク(BID)" width={88} />
                        <DateBox>
                            <DateInput aria-label="日付" value={date} onChange={e => setDate(e.target.value)} />
                            <DateButton aria-label="カレンダー"><Triangle color="#999" /></DateButton>
                        </DateBox>
                        <SearchButton>検索</SearchButton>
                    </Toolbar>

                    <Panel>
                        <Quote>
                            <span>2015/08/08 04:00</span>
                            <span>始値:<Num>{open}</Num></span>
                            <span>高値:<Num>{high}</Num></span>
                            <span>安値:<Num>{low}</Num></span>
                            <span>終値:<Num>{close}</Num></span>
                        </Quote>
                        <Legends>
                            <Legend name="単純移動平均:" items={averages} />
                            <Legend name="ボリンジャーバンド:" items={edge ? [...bands, lastBand] : bands} small />
                        </Legends>
                        <PaneRow>
                            <Dates>
                                {chart.dates.map(([text, left]) => <DateLabel key={text} style={{ left: percent(left, chart.price.box[0], chart.price.box[2]) }}>{text}</DateLabel>)}
                            </Dates>
                            <Axis />
                        </PaneRow>
                        <Pane chart={chart} pane={chart.price} height={plotPrice} />
                    </Panel>
                    <Divider />
                    <Panel>
                        <Legend name="RSI:" items={rsiSeries} />
                        <Pane chart={chart} pane={chart.rsi} height={plotRsi} />
                    </Panel>
                    <Divider />
                    <Panel $joined>
                        <Legend name="MACD:" items={macdSeries} />
                        <Pane chart={chart} pane={chart.macd} height={plotMacd} />
                    </Panel>
                    <Footer>
                        <FooterCell>始値:</FooterCell>
                        <FooterCell>高値:</FooterCell>
                        <FooterCell>安値:</FooterCell>
                        <FooterPrice>終値:<Num>{close}</Num></FooterPrice>
                        <SmallButton aria-label="前へ"><Triangle turn={90} /></SmallButton>
                        <Scroll type="range" min="0" max="100" defaultValue="90" aria-label="表示位置" />
                        <SmallButton aria-label="次へ"><Triangle turn={270} /></SmallButton>
                        <CountInput aria-label="表示本数" defaultValue="100" />
                        <SmallButton aria-label="本数を選択"><Triangle /></SmallButton>
                        <FooterSpace />
                        <SmallButton aria-label="拡大"><svg width="10" height="10" viewBox="0 0 10 10"><path d="M0 5H10M5 0V10" stroke="#444" strokeWidth="3" /></svg></SmallButton>
                        <SmallButton aria-label="縮小"><svg width="10" height="10" viewBox="0 0 10 10"><path d="M0 5H10" stroke="#444" strokeWidth="3" /></svg></SmallButton>
                    </Footer>
                </Main>
            </Body>
        </Frame>
    );
};

const App = () => (
    <>
        <GlobalStyle />
        <Desktop>
            <ChartWindow chart={usdJpy} edge />
            <ChartWindow chart={eurUsd} />
            <ChartWindow chart={eurJpy} />
        </Desktop>
    </>
);

const GlobalStyle = createGlobalStyle`
    * {
        box-sizing: border-box;
    }

    body {
        margin: 0;
        background: #ddd6ca;
    }

    body, button, input, select {
        font: 12px/14px "Liberation Sans", "Noto Sans CJK JP", sans-serif;
        font-feature-settings: "palt";
        color: #000;
    }

    svg {
        display: block;
    }
`;

const Desktop = styled.main`
    display: grid;
    grid-template-columns: 563fr 526fr 517fr;
    min-height: 100vh;
    margin-right: 4px;
    padding: 0 1px 1px 0;
    border-top: 8px solid #15305c;
    background: #999;
`;

const Frame = styled.section`
    display: flex;
    flex-direction: column;
    min-width: 0;
    padding: ${p => p.$edge ? '0 0 2px' : '0 2px 2px'};
    border-left: ${p => p.$edge ? 'none' : '1px solid #c0c0c0'};
    background: #dcdcdc;
`;

const TitleBar = styled.header`
    display: flex;
    align-items: center;
    gap: 3px;
    height: ${p => p.$edge ? 26 : 22}px;
    padding: ${p => p.$edge ? '4px 3px 1px 2px' : '0 5px 1px 4px'};
    border-top: 1px solid #eee;
    background: linear-gradient(#f4f4f4, #dcdcdc);
`;

const Logo = styled.svg`
    width: 16px;
    height: 16px;
    flex: none;
`;

const Title = styled.h1`
    flex: 1;
    margin: 0;
    overflow: hidden;
    font-size: 14px;
    font-weight: normal;
    line-height: 18px;
    color: #888;
    white-space: nowrap;
`;

const TitleButton = styled.button`
    display: flex;
    align-items: center;
    justify-content: center;
    width: 25px;
    height: 16px;
    padding: 0;
    border: 1px solid #bdbdbd;
    border-radius: 2px;
    background: linear-gradient(#fdfdfd, #e6e6e6);
`;

const MenuButton = styled(TitleButton)`
    gap: 4px;
    width: 46px;
    font-size: 9px;
    font-weight: bold;
    color: #888;
`;

const Body = styled.div`
    display: flex;
    flex: 1;
    gap: 6px;
    padding: 7px ${p => p.$edge ? 4 : 6}px 8px ${p => p.$edge ? 5 : 6}px;
    border: 1px solid #c4c4c4;
    border-left-width: ${p => p.$edge ? 0 : 1}px;
    background: #f7f7f7;
`;

const Tools = styled.div`
    display: flex;
    flex-direction: column;
    flex: none;
    gap: 3px;
    padding-top: 28px;
`;

const ToolButton = styled.button`
    display: flex;
    align-items: center;
    justify-content: center;
    width: 22px;
    height: 22px;
    padding: 0;
    border: 1px solid #a0a0a0;
    border-radius: 2px;
    background: ${p => p.$pressed ? 'linear-gradient(#a8a8a8, #d4d4d4)' : 'linear-gradient(#fff, #dcdcdc)'};
`;

const Main = styled.div`
    flex: 1;
    min-width: 0;
`;

const Toolbar = styled.div`
    display: flex;
    gap: 6px;
    height: 21px;
    margin-bottom: 6px;
`;

const SelectBox = styled.div`
    position: relative;
    width: ${p => p.$width}px;
    height: 21px;
`;

const NativeSelect = styled.select`
    appearance: none;
    width: 100%;
    height: 100%;
    padding: 0 14px 0 2px;
    border: 1px solid #a9a9a9;
    border-radius: 0;
    background: #fff;
    font-size: 11px;
`;

const SelectArrow = styled.span`
    position: absolute;
    inset: 1px 1px 1px auto;
    display: flex;
    align-items: center;
    justify-content: center;
    width: 16px;
    border-left: 1px solid #a9a9a9;
    background: linear-gradient(#e8e8e8, #c8c8c8);
    pointer-events: none;
`;

const DateBox = styled.div`
    display: flex;
    width: 82px;
    margin-left: 11px;
    border: 1px solid #a9a9a9;
`;

const DateInput = styled.input`
    flex: 1;
    min-width: 0;
    padding: 0 2px;
    border: 0;
    color: #888;
    white-space: pre;
`;

const DateButton = styled.button`
    display: flex;
    align-items: center;
    justify-content: center;
    width: 16px;
    padding: 0;
    border: 0;
    border-left: 1px solid #a9a9a9;
    background: #e0e0e0;
`;

const SearchButton = styled.button`
    width: 42px;
    padding: 0;
    border: 1px solid #c4c4c4;
    border-radius: 4px;
    background: linear-gradient(#fafafa, #ececec);
    color: #999;
`;

const Panel = styled.section`
    padding-bottom: 3px;
    border: 1px solid #a9a9a9;
    border-bottom-width: ${p => p.$joined ? 0 : 1}px;
    background: #f1f1f1;
`;

const Divider = styled.hr`
    height: 1px;
    margin: 3px 0 4px;
    border: 0;
    background: #a9a9a9;
`;

const Quote = styled.div`
    display: flex;
    gap: 5px;
    height: 15px;
    padding-left: 4px;
    border-bottom: 1px solid #a9a9a9;
    overflow: hidden;
    line-height: 15px;
    white-space: nowrap;
`;

const Num = styled.span`
    font-size: 11px;
`;

const Legends = styled.div`
    padding-top: 1px;
    border-bottom: 1px solid #a9a9a9;
`;

const LegendRow = styled.div`
    display: flex;
    height: 13px;
    gap: 7px;
    padding-left: 4px;
    overflow: hidden;
    line-height: 13px;
    white-space: nowrap;
`;

const LegendName = styled.span`
    flex: none;
    font-size: ${p => p.$small ? 10 : 12}px;
`;

const LegendItem = styled.span`
    flex: none;
    color: ${p => p.$color};
`;

const Dashes = styled.span`
    font-family: "Liberation Mono", monospace;
    font-size: 9px;
`;

const PaneRow = styled.div`
    display: flex;
    padding-left: 3px;
`;

const Dates = styled.div`
    position: relative;
    flex: 1;
    height: 14px;
`;

const DateLabel = styled.span`
    position: absolute;
    top: 0;
`;

const PlotArea = styled.div`
    position: relative;
    flex: 1;
    min-width: 0;
    overflow: hidden;
`;

const PlotSvg = styled.svg`
    width: 100%;
    height: ${p => p.$height}px;
    background: #000;

    * {
        vector-effect: non-scaling-stroke;
    }
`;

const Mark = styled.span`
    position: absolute;
    transform: translateY(-50%);
    color: ${p => p.$kind === 'high' ? '#ff6a00' : '#00d200'};
`;

const Axis = styled.div`
    position: relative;
    flex: none;
    width: 66px;
`;

const AxisLabels = styled.div`
    position: absolute;
    inset: 0;
    overflow: hidden;
`;

const AxisLabel = styled.span`
    position: absolute;
    left: 0;
    right: 0;
    transform: translateY(-50%);
    font-size: 11px;
    text-align: center;
`;

const PriceTag = styled(AxisLabel)`
    border: 1px solid #f08000;
    background: rgba(255, 150, 40, .93);
    color: #fff;
    line-height: 17px;
`;

const CursorTag = styled.div`
    position: absolute;
    left: -11px;
    right: 0;
    height: 20px;
    padding-left: 11px;
    transform: translateY(-50%);
`;

const CursorShape = styled.svg`
    position: absolute;
    inset: 0;
    width: 100%;
    height: 100%;
`;

const CursorText = styled.span`
    position: relative;
    display: block;
    font-size: 11px;
    line-height: 20px;
    text-align: center;
    color: #fff;
`;

const Footer = styled.footer`
    display: flex;
    height: 17px;
    padding-left: 4px;
    border: 1px solid #a9a9a9;
    line-height: 15px;
`;

const FooterCell = styled.span`
    width: 76px;
`;

const FooterPrice = styled.span`
    width: 68px;
    white-space: nowrap;
`;

const SmallButton = styled.button`
    display: flex;
    flex: none;
    align-items: center;
    justify-content: center;
    width: 16px;
    padding: 0;
    border: 0;
    border-left: 1px solid #b4b4b4;
    background: linear-gradient(#e8e8e8, #cfcfcf);
`;

const Scroll = styled.input`
    appearance: none;
    flex: 1;
    min-width: 0;
    height: 15px;
    margin: 0;
    background: linear-gradient(#ececec, #fff);

    &::-webkit-slider-thumb {
        appearance: none;
        width: 14px;
        height: 15px;
        border: 1px solid #b4b4b4;
        background: #d2d2d2;
    }
`;

const CountInput = styled.input`
    width: 28px;
    padding: 0;
    border: 0;
    border-left: 1px solid #b4b4b4;
    font-size: 11px;
    text-align: center;
`;

const FooterSpace = styled.span`
    width: 16px;
    border-left: 1px solid #b4b4b4;
`;

export default App;
